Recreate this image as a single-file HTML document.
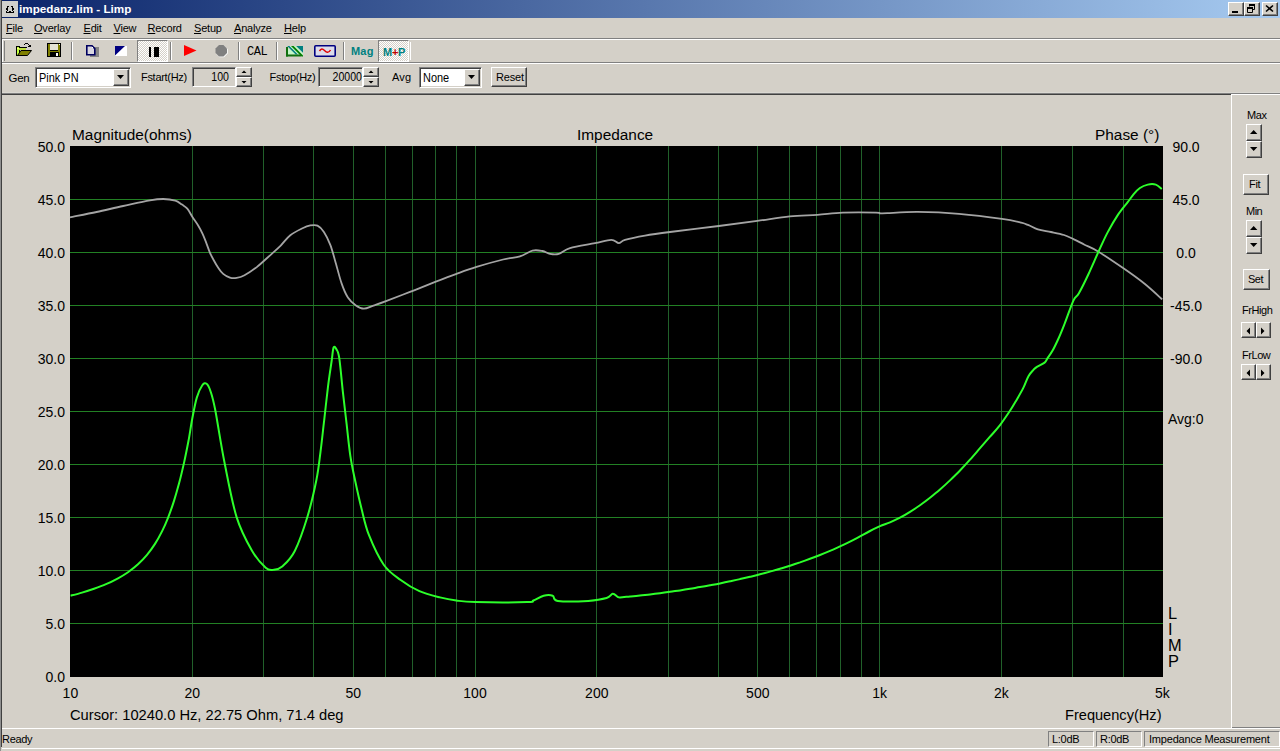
<!DOCTYPE html>
<html><head><meta charset="utf-8"><title>Limp</title><style>
*{margin:0;padding:0;box-sizing:border-box}
html,body{width:1280px;height:751px;overflow:hidden}
body{background:#d4d0c8;position:relative;font-family:"Liberation Sans",sans-serif;font-size:11px;color:#000;line-height:1}
.a{position:absolute}
.t{position:absolute;white-space:pre}
.u{text-decoration:underline}
.hl{position:absolute;height:1px}
.vl{position:absolute;width:1px}
.btn{position:absolute;background:#d4d0c8;border-top:1px solid #fff;border-left:1px solid #fff;border-right:1px solid #404040;border-bottom:1px solid #404040;box-shadow:inset -1px -1px 0 #808080}
.sunk{position:absolute;border-top:1px solid #808080;border-left:1px solid #808080;border-right:1px solid #fff;border-bottom:1px solid #fff;box-shadow:inset 1px 1px 0 #404040, inset -1px -1px 0 #d4d0c8}
.pane{position:absolute;border-top:1px solid #808080;border-left:1px solid #808080;border-right:1px solid #fff;border-bottom:1px solid #fff}
.pressed{position:absolute;border-top:1px solid #808080;border-left:1px solid #808080;border-right:1px solid #fff;border-bottom:1px solid #fff;background-color:#e8e6e2;background-image:repeating-conic-gradient(#fff 0 25%,#d4d0c8 0 50%);background-size:2px 2px}
.lbl{font-size:14px}
.ttl{font-size:15.4px}
</style></head><body>
<div class="vl" style="left:0;top:0;height:751px;background:#909090"></div>
<div class="vl" style="left:1px;top:0;height:747px;background:#404040"></div>
<div class="a" style="left:2px;top:0;width:1278px;height:18px;background:linear-gradient(to right,#0a246a,#a6caf0)"></div>
<div class="a" style="left:2px;top:1px;width:16px;height:16px;background:#d0d0cc"></div>
<svg class="a" style="left:2px;top:2px" width="16" height="16" shape-rendering="crispEdges" fill="#000"><rect x="5" y="4" width="1" height="1"/><rect x="6" y="4" width="1" height="1"/><rect x="9" y="4" width="1" height="1"/><rect x="10" y="4" width="1" height="1"/><rect x="5" y="5" width="1" height="1"/><rect x="10" y="5" width="1" height="1"/><rect x="4" y="6" width="1" height="1"/><rect x="5" y="6" width="1" height="1"/><rect x="10" y="6" width="1" height="1"/><rect x="11" y="6" width="1" height="1"/><rect x="4" y="7" width="1" height="1"/><rect x="5" y="7" width="1" height="1"/><rect x="10" y="7" width="1" height="1"/><rect x="11" y="7" width="1" height="1"/><rect x="5" y="8" width="1" height="1"/><rect x="10" y="8" width="1" height="1"/><rect x="4" y="9" width="1" height="1"/><rect x="7" y="9" width="1" height="1"/><rect x="8" y="9" width="1" height="1"/><rect x="11" y="9" width="1" height="1"/><rect x="4" y="10" width="1" height="1"/><rect x="5" y="10" width="1" height="1"/><rect x="6" y="10" width="1" height="1"/><rect x="7" y="10" width="1" height="1"/><rect x="8" y="10" width="1" height="1"/><rect x="9" y="10" width="1" height="1"/><rect x="10" y="10" width="1" height="1"/><rect x="11" y="10" width="1" height="1"/></svg>
<div class="t" style="left:19px;top:3px;font-weight:bold;font-size:11.7px;color:#fff">impedanz.lim - Limp</div>
<div class="btn" style="left:1228px;top:2px;width:16px;height:14px"></div>
<div class="btn" style="left:1244px;top:2px;width:16px;height:14px"></div>
<div class="btn" style="left:1262px;top:2px;width:16px;height:14px"></div>
<div class="a" style="left:1232px;top:11px;width:6px;height:2px;background:#000"></div>
<svg class="a" style="left:1244px;top:2px" width="16" height="14"><path d="M5 2h5v5H8M5 2v2" stroke="#000" stroke-width="1" fill="none" transform="translate(0.5 0.5)"/><rect x="5" y="2" width="6" height="2" fill="#000"/><path d="M3 5h5v5H3z" stroke="#000" stroke-width="1" fill="#d4d0c8" transform="translate(0.5 0.5)"/><rect x="3" y="5" width="6" height="2" fill="#000"/></svg>
<svg class="a" style="left:1262px;top:2px" width="16" height="14"><path d="M4 3.5l7 6M11 3.5l-7 6" stroke="#000" stroke-width="1.6" fill="none"/></svg>
<div class="t" style="left:6px;top:23px;letter-spacing:-0.2px"><span class="u">F</span>ile</div>
<div class="t" style="left:34px;top:23px;letter-spacing:-0.2px"><span class="u">O</span>verlay</div>
<div class="t" style="left:83.5px;top:23px;letter-spacing:-0.2px"><span class="u">E</span>dit</div>
<div class="t" style="left:113.5px;top:23px;letter-spacing:-0.2px"><span class="u">V</span>iew</div>
<div class="t" style="left:147.5px;top:23px;letter-spacing:-0.2px"><span class="u">R</span>ecord</div>
<div class="t" style="left:194px;top:23px;letter-spacing:-0.2px"><span class="u">S</span>etup</div>
<div class="t" style="left:234px;top:23px;letter-spacing:-0.2px"><span class="u">A</span>nalyze</div>
<div class="t" style="left:284px;top:23px;letter-spacing:-0.2px"><span class="u">H</span>elp</div>
<div class="hl" style="left:2px;top:38px;width:1278px;background:#808080"></div>
<div class="hl" style="left:2px;top:39px;width:1278px;background:#fff"></div>
<div class="hl" style="left:2px;top:62px;width:1278px;background:#808080"></div>
<div class="hl" style="left:2px;top:63px;width:1278px;background:#fff"></div>
<div class="vl" style="left:2px;top:40px;height:22px;background:#fff"></div>
<div class="vl" style="left:4px;top:41px;height:20px;background:#808080"></div>
<div class="hl" style="left:2px;top:92px;width:1278px;background:#dad8d2"></div>
<div class="hl" style="left:2px;top:93px;width:1278px;background:#808080"></div>
<div class="hl" style="left:2px;top:94px;width:1229px;background:#404040"></div>
<div class="hl" style="left:1231px;top:94px;width:49px;background:#fff"></div>
<div class="vl" style="left:1231px;top:94px;height:634px;background:#fff"></div>
<div class="hl" style="left:1232px;top:727px;width:48px;background:#808080"></div>
<div class="hl" style="left:2px;top:728px;width:1278px;background:#fff"></div>
<svg class="a" style="left:16px;top:43px" width="16" height="14" shape-rendering="crispEdges"><path d="M8 1h1M9 0h3M12 1h1M13 2h1M12 3h3M14 2h1" stroke="#000" stroke-width="1" transform="translate(0 0.5)"/><rect x="0" y="3" width="4" height="10" fill="#000"/><rect x="4" y="4" width="7" height="1" fill="#000"/><rect x="1" y="4" width="2" height="8" fill="#c0ff40"/><rect x="3" y="5" width="7" height="2" fill="#c0e040"/><rect x="1" y="5" width="2" height="1" fill="#ffff80"/><path d="M1.5 12.5L5 7.5H15.5L11.5 12.5z" fill="#808000" stroke="#000" shape-rendering="auto"/></svg>
<svg class="a" style="left:47px;top:43px" width="14" height="14" shape-rendering="crispEdges"><rect width="14" height="14" fill="#000"/><rect x="1" y="1" width="12" height="12" fill="#808000"/><rect x="3" y="1" width="8" height="6" fill="#e4e2d4"/><rect x="3" y="7" width="8" height="1" fill="#000"/><rect x="3" y="9" width="9" height="5" fill="#000"/><rect x="9" y="10" width="2" height="3" fill="#fff"/><rect x="12" y="1" width="1" height="1" fill="#fff"/></svg>
<div class="vl" style="left:71px;top:42px;height:18px;background:#808080"></div><div class="vl" style="left:72px;top:42px;height:18px;background:#fff"></div>
<svg class="a" style="left:86px;top:45px" width="14" height="13"><rect x="4" y="2" width="9" height="10" fill="#858585"/><path d="M0.8 0.8h5.2l2.8 2.8v6.2h-8z" fill="#d8d6e0" stroke="#000060" stroke-width="1.6"/><rect x="6" y="2" width="1" height="1" fill="#fff"/></svg>
<svg class="a" style="left:115px;top:46px" width="12" height="10"><rect width="12" height="10" fill="#fff"/><path d="M0 0h10L0 9.5z" fill="#000080"/></svg>
<div class="pressed" style="left:137px;top:40px;width:31px;height:22px"></div>
<div class="a" style="left:149px;top:47px;width:2px;height:10px;background:#000"></div><div class="a" style="left:154px;top:47px;width:5px;height:10px;background:#000"></div>
<div class="vl" style="left:170px;top:42px;height:18px;background:#808080"></div><div class="vl" style="left:171px;top:42px;height:18px;background:#fff"></div>
<svg class="a" style="left:184px;top:45px" width="13" height="12"><path d="M0 0L12.5 5.5L0 11z" fill="#f00"/></svg>
<svg class="a" style="left:215px;top:44px" width="14" height="14"><path d="M4.5 1.5h4.5l3.8 3.8v4.2l-3.8 3.8h-4.5l-3.5-3.5v-4.5z" fill="#fff"/><path d="M4 1h4.5l3.5 3.5v4.5l-3.5 3.5h-4.5l-3.5-3.5v-4.5z" fill="#808080"/></svg>
<div class="vl" style="left:238px;top:42px;height:18px;background:#808080"></div><div class="vl" style="left:239px;top:42px;height:18px;background:#fff"></div>
<div class="t" style="left:247px;top:46px;font-family:'Liberation Mono',monospace;font-size:12px;letter-spacing:-0.5px">CAL</div>
<div class="vl" style="left:276px;top:42px;height:18px;background:#808080"></div><div class="vl" style="left:277px;top:42px;height:18px;background:#fff"></div>
<svg class="a" style="left:286px;top:46px" width="18" height="11"><path d="M2 2.5V8.5H12z" fill="#c4f8c8"/><path d="M3.2 0H5L14 9H12.3z" fill="#c4f8c8"/><path d="M7.5 0H10L17 7V9.5z" fill="#c4f8c8"/><path d="M1.2 0H3.4L11.9 8.5H9.7z" fill="#008080"/><path d="M5 0H7.6L17 9.4V10.5H15.5z" fill="#008000"/><path d="M10.2 0H17V6.8z" fill="#008080"/><rect x="0" y="1" width="2" height="9.5" fill="#107010"/><rect x="0" y="8.5" width="15" height="2" fill="#107010"/></svg>
<svg class="a" style="left:314px;top:45px" width="23" height="12"><rect x="0.8" y="0.8" width="20.4" height="10.4" rx="1" fill="#dcdcea" stroke="#000080" stroke-width="1.6"/><path d="M5.5 6C7 3.5 8.5 3.5 10.5 5.5S14.5 8.5 16.5 5" stroke="#e00000" stroke-width="1.5" fill="none"/></svg>
<div class="vl" style="left:343px;top:42px;height:18px;background:#808080"></div><div class="vl" style="left:344px;top:42px;height:18px;background:#fff"></div>
<div class="t" style="left:351px;top:46px;font-weight:bold;font-size:11px;color:#008080;letter-spacing:0.2px">Mag</div>
<div class="pressed" style="left:378px;top:40px;width:31px;height:22px"></div>
<div class="t" style="left:383px;top:47px;font-weight:bold;font-size:11px;color:#008080;letter-spacing:-0.3px">M<span style="color:#c00000">+</span>P</div>
<div class="vl" style="left:410px;top:42px;height:18px;background:#fff"></div>
<div class="t" style="left:8.5px;top:73px;font-size:11.5px;letter-spacing:-0.3px">Gen</div>
<div class="sunk" style="left:35px;top:67px;width:96px;height:21px;background:#fff"></div>
<div class="t" style="left:39px;top:72px;font-size:12.3px;transform:scaleX(0.89);transform-origin:0 0">Pink PN</div>
<div class="btn" style="left:113px;top:69px;width:16px;height:17px"></div>
<svg class="a" style="left:113px;top:69px" width="16" height="17"><path d="M4 6h7l-3.5 4z" fill="#000"/></svg>
<div class="t" style="left:141px;top:72px;letter-spacing:-0.3px">Fstart(Hz)</div>
<div class="sunk" style="left:192px;top:67px;width:44px;height:20px;background:#d4d0c8"></div>
<div class="t" style="left:192px;top:71px;width:37px;text-align:right;font-size:12.3px;transform:scaleX(0.86);transform-origin:100% 0">100</div>
<div class="btn" style="left:236px;top:67px;width:16px;height:10px"></div>
<div class="btn" style="left:236px;top:77px;width:16px;height:10px"></div>
<svg class="a" style="left:236px;top:67px" width="16" height="20"><path d="M5.5 6h5l-2.5-2.5zM5.5 14h5l-2.5 2.5z" fill="#000"/></svg>
<div class="t" style="left:269.5px;top:72px;letter-spacing:-0.25px">Fstop(Hz)</div>
<div class="sunk" style="left:318px;top:67px;width:45px;height:20px;background:#d4d0c8"></div>
<div class="t" style="left:318px;top:71px;width:44px;text-align:right;font-size:12.3px;transform:scaleX(0.86);transform-origin:100% 0">20000</div>
<div class="btn" style="left:363px;top:67px;width:16px;height:10px"></div>
<div class="btn" style="left:363px;top:77px;width:16px;height:10px"></div>
<svg class="a" style="left:363px;top:67px" width="16" height="20"><path d="M5.5 6h5l-2.5-2.5zM5.5 14h5l-2.5 2.5z" fill="#000"/></svg>
<div class="t" style="left:392px;top:72px;letter-spacing:0.2px">Avg</div>
<div class="sunk" style="left:419px;top:67px;width:63px;height:21px;background:#fff"></div>
<div class="t" style="left:423px;top:72px;font-size:12.3px;transform:scaleX(0.89);transform-origin:0 0">None</div>
<div class="btn" style="left:464px;top:69px;width:16px;height:17px"></div>
<svg class="a" style="left:464px;top:69px" width="16" height="17"><path d="M4 6h7l-3.5 4z" fill="#000"/></svg>
<div class="btn" style="left:491px;top:67px;width:36px;height:20px"></div>
<div class="t" style="left:496px;top:72px;letter-spacing:-0.2px">Reset</div>
<div class="t lbl" style="left:0;width:65px;text-align:right;top:140px">50.0</div>
<div class="t lbl" style="left:0;width:65px;text-align:right;top:193px">45.0</div>
<div class="t lbl" style="left:0;width:65px;text-align:right;top:246px">40.0</div>
<div class="t lbl" style="left:0;width:65px;text-align:right;top:299px">35.0</div>
<div class="t lbl" style="left:0;width:65px;text-align:right;top:352px">30.0</div>
<div class="t lbl" style="left:0;width:65px;text-align:right;top:405px">25.0</div>
<div class="t lbl" style="left:0;width:65px;text-align:right;top:458px">20.0</div>
<div class="t lbl" style="left:0;width:65px;text-align:right;top:511px">15.0</div>
<div class="t lbl" style="left:0;width:65px;text-align:right;top:564px">10.0</div>
<div class="t lbl" style="left:0;width:65px;text-align:right;top:617px">5.0</div>
<div class="t lbl" style="left:0;width:65px;text-align:right;top:670px">0.0</div>
<div class="t lbl" style="left:1136px;width:100px;text-align:center;top:140px">90.0</div>
<div class="t lbl" style="left:1136px;width:100px;text-align:center;top:193px">45.0</div>
<div class="t lbl" style="left:1136px;width:100px;text-align:center;top:246px">0.0</div>
<div class="t lbl" style="left:1136px;width:100px;text-align:center;top:299px">-45.0</div>
<div class="t lbl" style="left:1136px;width:100px;text-align:center;top:352px">-90.0</div>
<div class="t ttl" style="left:72px;top:127px">Magnitude(ohms)</div>
<div class="t ttl" style="left:577px;top:127px">Impedance</div>
<div class="t ttl" style="left:1095px;top:127px">Phase (°)</div>
<div class="t lbl" style="left:1168px;top:412px">Avg:0</div>
<div class="t" style="left:1168px;top:605px;font-size:16.4px">L</div>
<div class="t" style="left:1168px;top:621px;font-size:16.4px">I</div>
<div class="t" style="left:1168px;top:637px;font-size:16.4px">M</div>
<div class="t" style="left:1168px;top:653px;font-size:16.4px">P</div>
<div class="t lbl" style="left:40.4px;width:60px;text-align:center;top:686px">10</div>
<div class="t lbl" style="left:162.2px;width:60px;text-align:center;top:686px">20</div>
<div class="t lbl" style="left:323.2px;width:60px;text-align:center;top:686px">50</div>
<div class="t lbl" style="left:445.0px;width:60px;text-align:center;top:686px">100</div>
<div class="t lbl" style="left:566.8px;width:60px;text-align:center;top:686px">200</div>
<div class="t lbl" style="left:727.8px;width:60px;text-align:center;top:686px">500</div>
<div class="t lbl" style="left:849.6px;width:60px;text-align:center;top:686px">1k</div>
<div class="t lbl" style="left:971.4px;width:60px;text-align:center;top:686px">2k</div>
<div class="t lbl" style="left:1132.4px;width:60px;text-align:center;top:686px">5k</div>
<div class="t" style="left:70px;top:708px;font-size:14.7px">Cursor: 10240.0 Hz, 22.75 Ohm, 71.4 deg</div>
<div class="t" style="left:1065px;top:708px;font-size:14.6px">Frequency(Hz)</div>
<div class="t" style="left:1247px;top:110px;letter-spacing:-0.4px">Max</div>
<div class="btn" style="left:1246px;top:124px;width:16px;height:17px"></div>
<div class="btn" style="left:1246px;top:141px;width:16px;height:17px"></div>
<svg class="a" style="left:1246px;top:124px" width="16" height="34"><path d="M4 10h7.4l-3.7-4zM4 23h7.4l-3.7 4z" fill="#000"/></svg>
<div class="btn" style="left:1243px;top:174px;width:26px;height:21px"></div>
<div class="t" style="left:1249px;top:179px;letter-spacing:-0.3px">Fit</div>
<div class="t" style="left:1246px;top:206px;letter-spacing:-0.5px">Min</div>
<div class="btn" style="left:1246px;top:220px;width:16px;height:17px"></div>
<div class="btn" style="left:1246px;top:237px;width:16px;height:17px"></div>
<svg class="a" style="left:1246px;top:220px" width="16" height="34"><path d="M4 10h7.4l-3.7-4zM4 23h7.4l-3.7 4z" fill="#000"/></svg>
<div class="btn" style="left:1243px;top:269px;width:27px;height:21px"></div>
<div class="t" style="left:1248px;top:274px;letter-spacing:-0.5px">Set</div>
<div class="t" style="left:1242px;top:305px;letter-spacing:-0.45px">FrHigh</div>
<div class="btn" style="left:1241px;top:322px;width:15px;height:16px"></div>
<div class="btn" style="left:1256px;top:322px;width:15px;height:16px"></div>
<svg class="a" style="left:1241px;top:322px" width="30" height="17"><path d="M9 5.5v7l-3.5-3.5zM20 5.5v7l3.5-3.5z" fill="#000"/></svg>
<div class="t" style="left:1242px;top:350px;letter-spacing:-0.45px">FrLow</div>
<div class="btn" style="left:1241px;top:364px;width:15px;height:16px"></div>
<div class="btn" style="left:1256px;top:364px;width:15px;height:16px"></div>
<svg class="a" style="left:1241px;top:364px" width="30" height="17"><path d="M9 5.5v7l-3.5-3.5zM20 5.5v7l3.5-3.5z" fill="#000"/></svg>
<div class="t" style="left:2px;top:734px;letter-spacing:-0.3px">Ready</div>
<div class="pane" style="left:1048px;top:731px;width:46px;height:16px"></div>
<div class="t" style="left:1052px;top:734px;letter-spacing:-0.3px">L:0dB</div>
<div class="pane" style="left:1096px;top:731px;width:46px;height:16px"></div>
<div class="t" style="left:1100px;top:734px;letter-spacing:-0.3px">R:0dB</div>
<div class="pane" style="left:1144px;top:731px;width:136px;height:16px"></div>
<div class="t" style="left:1149px;top:734px;letter-spacing:-0.2px">Impedance Measurement</div>
<div class="hl" style="left:2px;top:748px;width:1278px;background:#fff"></div>
<svg class="a" style="left:0;top:0" width="1280" height="751" viewBox="0 0 1280 751">
<rect x="70" y="146" width="1093" height="531" fill="#000"/>
<path d="M192.5 146V677M263.5 146V677M313.5 146V677M353.5 146V677M385.5 146V677M412.5 146V677M435.5 146V677M456.5 146V677M475.5 146V677M596.5 146V677M668.5 146V677M718.5 146V677M757.5 146V677M789.5 146V677M816.5 146V677M840.5 146V677M861.5 146V677M879.5 146V677M1001.5 146V677M1072.5 146V677M1123.5 146V677" stroke="#21602a" stroke-width="1" fill="none"/><path d="M70 199.5H1163M70 252.5H1163M70 305.5H1163M70 358.5H1163M70 411.5H1163M70 464.5H1163M70 517.5H1163M70 570.5H1163M70 623.5H1163" stroke="#228024" stroke-width="1" fill="none"/>
<path d="M70.0 217.3C74.4 216.4 87.7 213.9 96.6 212.0C105.5 210.1 114.3 207.9 123.2 206.0C132.1 204.1 143.2 201.6 149.9 200.4C156.6 199.2 159.0 199.0 163.2 199.0C167.4 199.0 172.2 199.7 175.3 200.6C178.4 201.5 180.0 203.3 182.0 204.6C184.0 205.9 185.5 206.5 187.3 208.6C189.1 210.7 190.8 214.5 192.6 217.3C194.4 220.1 196.3 222.5 198.0 225.3C199.7 228.1 201.3 231.1 202.6 233.9C203.9 236.7 204.7 238.8 205.9 241.9C207.1 245.0 208.6 249.5 209.9 252.6C211.2 255.7 212.6 258.1 213.9 260.5C215.2 262.9 216.4 265.0 217.9 267.2C219.4 269.4 221.2 272.2 223.2 273.9C225.2 275.6 227.7 276.9 229.9 277.6C232.1 278.3 234.2 278.3 236.6 277.9C239.0 277.5 241.1 277.0 244.5 275.2C247.9 273.4 252.4 270.6 256.8 267.1C261.2 263.6 267.2 257.9 271.2 254.3C275.2 250.7 277.5 248.8 280.7 245.6C283.9 242.4 286.6 238.1 290.3 235.2C294.0 232.3 299.9 229.6 303.1 228.0C306.3 226.4 307.1 226.0 309.5 225.6C311.9 225.2 315.1 224.5 317.5 225.6C319.9 226.7 321.8 228.8 323.9 232.0C326.0 235.2 328.4 240.0 330.3 244.8C332.2 249.6 333.2 254.3 335.1 260.7C337.0 267.1 339.4 277.0 341.5 283.1C343.6 289.2 345.5 293.8 347.9 297.5C350.3 301.2 353.2 303.6 355.9 305.5C358.6 307.4 361.0 308.7 363.9 308.7C366.8 308.7 369.8 306.9 373.5 305.6C377.2 304.3 379.9 303.4 386.0 301.1C392.1 298.8 401.8 295.1 410.0 291.9C418.2 288.7 427.4 284.9 435.2 281.9C442.9 278.9 449.6 276.3 456.5 273.8C463.4 271.3 468.7 269.3 476.5 266.9C484.3 264.5 495.9 261.3 503.1 259.5C510.4 257.7 515.1 257.8 520.0 256.3C524.9 254.8 528.8 251.5 532.5 250.6C536.2 249.7 539.6 250.5 542.5 251.0C545.4 251.5 547.3 253.3 550.0 253.8C552.7 254.3 555.5 254.8 558.8 253.8C562.1 252.9 564.0 249.9 570.0 248.1C576.0 246.3 588.1 244.5 595.0 243.1C601.9 241.7 607.3 239.8 611.3 239.8C615.3 239.8 616.5 243.1 618.8 243.1C621.1 243.1 620.6 241.1 625.0 239.8C629.4 238.6 637.5 236.9 645.0 235.6C652.5 234.3 657.7 233.6 670.0 232.0C682.3 230.4 704.2 227.8 718.8 226.0C733.3 224.2 745.5 222.5 757.3 220.9C769.1 219.3 779.8 217.4 789.8 216.4C799.8 215.4 808.5 215.4 817.3 214.8C826.1 214.2 832.9 213.1 842.7 212.7C852.5 212.3 869.8 212.5 876.0 212.6C882.2 212.7 878.1 213.3 880.0 213.4C881.9 213.5 881.0 213.4 887.3 213.2C893.6 212.9 905.8 211.8 917.8 211.9C929.8 212.0 945.0 212.6 959.0 213.8C973.0 215.0 991.6 217.4 1002.0 218.9C1012.4 220.4 1016.8 221.6 1021.2 222.7C1025.6 223.8 1025.8 224.1 1028.6 225.2C1031.4 226.3 1034.2 228.3 1037.9 229.4C1041.6 230.5 1046.7 231.1 1051.0 232.0C1055.3 232.9 1060.3 233.8 1064.0 235.0C1067.7 236.2 1070.0 237.5 1073.4 239.1C1076.8 240.7 1080.5 242.7 1084.5 244.7C1088.5 246.7 1091.2 247.3 1097.6 251.2C1104.0 255.1 1115.3 262.7 1123.1 268.1C1130.9 273.5 1138.1 278.6 1144.6 283.8C1151.1 289.0 1159.3 296.8 1162.2 299.4" stroke="#a4a4a4" stroke-width="1.8" fill="none" stroke-linejoin="round"/>
<path d="M70.6 595.7C72.5 595.2 78.1 593.8 82.0 592.6C85.9 591.5 90.0 590.2 94.0 588.8C98.0 587.4 102.0 586.0 106.0 584.2C110.0 582.5 114.3 580.3 118.0 578.3C121.7 576.3 124.7 574.5 128.0 572.2C131.3 569.9 134.8 567.2 138.0 564.3C141.2 561.4 144.2 558.3 147.0 554.9C149.8 551.5 152.5 547.8 155.0 543.9C157.5 540.0 159.8 535.8 162.0 531.4C164.2 527.0 166.0 522.9 168.0 517.8C170.0 512.7 172.2 506.6 174.0 500.9C175.8 495.2 177.3 489.9 179.0 483.6C180.7 477.3 182.4 470.0 184.0 462.9C185.6 455.8 187.1 448.1 188.5 440.8C189.9 433.5 190.8 426.2 192.2 419.0C193.6 411.8 195.1 403.2 196.8 397.6C198.5 392.0 200.7 387.6 202.3 385.3C203.9 383.0 205.2 382.8 206.6 383.8C208.0 384.8 209.2 387.2 210.6 391.5C212.0 395.8 212.9 398.1 215.2 409.8C217.5 421.6 220.8 444.1 224.4 462.0C228.0 479.9 232.0 502.3 236.6 517.1C241.2 531.9 247.2 542.4 252.0 550.8C256.9 559.2 262.1 564.5 265.7 567.7C269.3 570.9 270.6 570.0 273.4 569.8C276.2 569.5 279.0 569.4 282.6 566.2C286.2 563.0 290.8 559.1 294.9 550.8C299.0 542.5 303.9 528.3 307.5 516.5C311.1 504.7 314.2 490.8 316.4 480.0C318.6 469.2 319.2 461.9 320.5 451.9C321.8 441.9 322.9 431.1 324.2 420.2C325.4 409.3 326.8 396.6 328.0 386.6C329.2 376.7 330.8 367.0 331.7 360.5C332.6 354.0 332.8 349.4 333.6 347.5C334.4 345.6 335.5 347.6 336.4 349.3C337.3 351.0 338.1 350.6 339.2 357.7C340.3 364.8 341.7 381.2 342.9 392.2C344.1 403.2 345.4 413.3 346.6 423.9C347.8 434.5 348.9 446.2 350.3 455.6C351.7 465.0 353.1 471.1 355.0 480.0C356.9 488.9 359.3 499.8 361.6 509.0C363.9 518.2 365.3 525.9 369.0 535.2C372.7 544.5 378.6 557.5 383.9 565.0C389.2 572.5 394.8 575.6 400.7 580.0C406.6 584.4 412.8 588.3 419.4 591.2C425.9 594.1 433.9 595.9 440.0 597.4C446.1 598.9 450.4 599.7 456.3 600.5C462.2 601.3 463.7 601.8 475.5 602.1C487.3 602.4 517.6 602.4 527.3 602.1C536.9 601.8 530.7 601.5 533.4 600.5C536.1 599.5 540.4 596.6 543.6 595.8C546.8 595.0 550.3 594.9 552.7 595.8C555.1 596.6 551.9 600.0 557.8 600.9C563.7 601.8 580.2 601.4 588.3 600.9C596.4 600.4 602.5 599.2 606.6 598.0C610.7 596.8 610.9 594.0 612.7 593.8C614.6 593.6 616.5 596.2 617.7 596.8C618.9 597.4 618.0 597.4 620.0 597.4C622.0 597.4 626.7 596.8 630.0 596.5C633.3 596.2 636.7 595.9 640.0 595.5C643.3 595.1 646.7 594.8 650.0 594.4C653.3 594.0 656.7 593.6 660.0 593.2C663.3 592.8 666.7 592.3 670.0 591.8C673.3 591.3 676.7 590.9 680.0 590.4C683.3 589.9 686.7 589.3 690.0 588.8C693.3 588.2 696.7 587.7 700.0 587.1C703.3 586.5 706.7 585.9 710.0 585.3C713.3 584.7 716.7 584.1 720.0 583.4C723.3 582.7 726.7 582.0 730.0 581.3C733.3 580.6 736.7 579.9 740.0 579.1C743.3 578.4 746.7 577.6 750.0 576.8C753.3 576.0 756.7 575.2 760.0 574.3C763.3 573.4 766.7 572.5 770.0 571.6C773.3 570.7 776.7 569.8 780.0 568.8C783.3 567.8 786.7 566.8 790.0 565.7C793.3 564.6 796.7 563.5 800.0 562.4C803.3 561.2 806.7 560.0 810.0 558.8C813.3 557.6 816.7 556.3 820.0 555.0C823.3 553.7 826.7 552.3 830.0 550.9C833.3 549.5 836.7 547.9 840.0 546.4C843.3 544.9 846.7 543.3 850.0 541.6C853.3 539.9 856.7 538.2 860.0 536.4C863.3 534.6 866.7 532.7 870.0 531.0C873.3 529.3 876.7 527.7 880.0 526.2C883.3 524.8 886.7 523.7 890.0 522.3C893.3 520.9 896.7 519.4 900.0 517.7C903.3 516.0 906.7 514.0 910.0 511.9C913.3 509.8 916.7 507.6 920.0 505.2C923.3 502.8 926.7 500.3 930.0 497.7C933.3 495.1 936.7 492.4 940.0 489.5C943.3 486.6 946.7 483.6 950.0 480.4C953.3 477.2 956.7 473.9 960.0 470.5C963.3 467.1 966.7 463.4 970.0 459.7C973.3 456.0 976.7 452.0 980.0 448.2C983.3 444.4 986.7 440.5 990.0 436.7C993.3 432.9 996.7 429.4 1000.0 425.1C1003.3 420.8 1007.2 415.0 1010.0 410.8C1012.8 406.6 1014.4 403.7 1016.6 399.9C1018.8 396.1 1021.3 391.9 1023.3 387.9C1025.3 383.9 1026.8 379.0 1028.6 375.9C1030.4 372.8 1032.5 370.9 1033.9 369.3C1035.4 367.8 1035.5 367.7 1037.3 366.6C1039.1 365.5 1042.9 363.9 1044.6 362.6C1046.3 361.3 1046.0 360.6 1047.3 358.6C1048.6 356.6 1050.7 354.0 1052.6 350.6C1054.5 347.2 1056.5 342.9 1058.5 338.5C1060.5 334.1 1062.0 330.3 1064.5 324.0C1067.0 317.7 1071.0 305.7 1073.4 300.6C1075.8 295.5 1076.4 297.6 1078.9 293.2C1081.4 288.8 1084.8 282.0 1088.3 274.5C1091.8 267.0 1096.7 255.5 1100.0 248.4C1103.3 241.3 1104.9 237.5 1107.9 231.9C1110.9 226.3 1114.6 219.9 1117.9 214.9C1121.2 209.9 1125.2 205.4 1127.9 201.9C1130.6 198.4 1131.9 196.2 1133.9 193.9C1135.9 191.6 1137.6 189.6 1139.9 188.0C1142.2 186.4 1145.2 185.2 1147.8 184.6C1150.4 184.0 1153.5 183.9 1155.8 184.6C1158.1 185.3 1160.8 188.3 1161.8 189.0" stroke="#2cff2a" stroke-width="2" fill="none" stroke-linejoin="round"/>
</svg>
</body></html>
